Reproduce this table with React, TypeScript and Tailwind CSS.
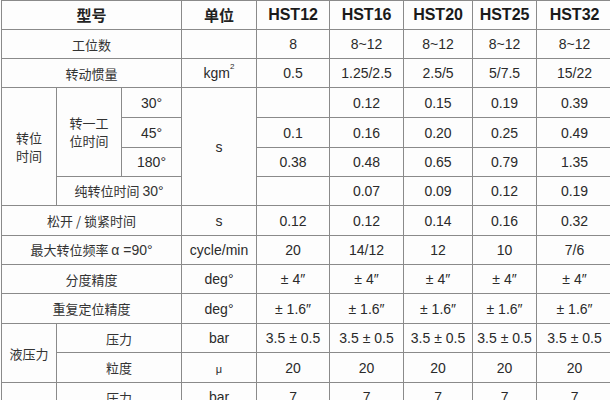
const cols = [55, 65, 60, 75, 73, 74, 69, 64, 76];

function C({
  children,
  cs,
  rs,
  cn = true,
}: {
  children?: React.ReactNode;
  cs?: number;
  rs?: number;
  cn?: boolean;
}) {
  return (
    <td
      colSpan={cs}
      rowSpan={rs}
      className={
        "border border-[#8a8a8a] text-center align-middle p-0 leading-none " +
        (cn
          ? "text-[13px] text-[#333] font-['Noto_Sans_CJK_SC',sans-serif]"
          : "text-[14px] text-[#2a2a2a] font-['Liberation_Sans',Arial,sans-serif]")
      }
    >
      {children}
    </td>
  );
}

function Vals({ v }: { v: string[] }) {
  return (
    <>
      {v.map((x, i) => (
        <C key={i} cn={false}>
          {x}
        </C>
      ))}
    </>
  );
}

const deg = "°";

export default function App() {
  return (
    <div className="w-[610px] h-[400px] overflow-hidden bg-[#fdfdfd]">
      <table className="table-fixed border-collapse w-[612px] ml-px">
        <colgroup>
          {cols.map((w, i) => (
            <col key={i} style={{ width: w }} />
          ))}
        </colgroup>
        <tbody>
          <tr className="h-[29px]">
            <td colSpan={3} className="border border-[#8a8a8a] text-center text-[15px] font-bold text-[#222] font-['Noto_Sans_CJK_SC',sans-serif]">
              型号
            </td>
            <td className="border border-[#8a8a8a] text-center text-[15px] font-bold text-[#222] font-['Noto_Sans_CJK_SC',sans-serif]">
              单位
            </td>
            {["HST12", "HST16", "HST20", "HST25", "HST32"].map((h) => (
              <td key={h} className="border border-[#8a8a8a] text-center text-[16px] font-bold text-[#1a1a1a] font-['Liberation_Sans',Arial,sans-serif]">
                {h}
              </td>
            ))}
          </tr>
          <tr className="h-[29px]">
            <C cs={3}>工位数</C>
            <C />
            <Vals v={["8", "8~12", "8~12", "8~12", "8~12"]} />
          </tr>
          <tr className="h-[29px]">
            <C cs={3}>转动惯量</C>
            <C cn={false}>
              kgm<sup className="text-[8px] align-top relative top-[1px]">2</sup>
            </C>
            <Vals v={["0.5", "1.25/2.5", "2.5/5", "5/7.5", "15/22"]} />
          </tr>
          <tr className="h-[30px]">
            <C rs={4}>
              <span className="leading-[18px] block">
                转位
                <br />
                时间
              </span>
            </C>
            <C rs={3}>
              <span className="leading-[18px] block">
                转一工
                <br />
                位时间
              </span>
            </C>
            <C cn={false}>30{deg}</C>
            <C rs={4} cn={false}>s</C>
            <Vals v={["", "0.12", "0.15", "0.19", "0.39"]} />
          </tr>
          <tr className="h-[30px]">
            <C cn={false}>45{deg}</C>
            <Vals v={["0.1", "0.16", "0.20", "0.25", "0.49"]} />
          </tr>
          <tr className="h-[29px]">
            <C cn={false}>180{deg}</C>
            <Vals v={["0.38", "0.48", "0.65", "0.79", "1.35"]} />
          </tr>
          <tr className="h-[29px]">
            <C cs={2}>
              纯转位时间 <span className="text-[14px] font-['Liberation_Sans',Arial,sans-serif]">30{deg}</span>
            </C>
            <Vals v={["", "0.07", "0.09", "0.12", "0.19"]} />
          </tr>
          <tr className="h-[30px]">
            <C cs={3}>松开 / 锁紧时间</C>
            <C cn={false}>s</C>
            <Vals v={["0.12", "0.12", "0.14", "0.16", "0.32"]} />
          </tr>
          <tr className="h-[29px]">
            <C cs={3}>
              最大转位频率 <span className="text-[14px] font-['Liberation_Sans',Arial,sans-serif]">α =90{deg}</span>
            </C>
            <C cn={false}>cycle/min</C>
            <Vals v={["20", "14/12", "12", "10", "7/6"]} />
          </tr>
          <tr className="h-[29px]">
            <C cs={3}>分度精度</C>
            <C cn={false}>deg{deg}</C>
            <Vals v={["± 4″", "± 4″", "± 4″", "± 4″", "± 4″"]} />
          </tr>
          <tr className="h-[30px]">
            <C cs={3}>重复定位精度</C>
            <C cn={false}>deg{deg}</C>
            <Vals v={["± 1.6″", "± 1.6″", "± 1.6″", "± 1.6″", "± 1.6″"]} />
          </tr>
          <tr className="h-[29px]">
            <C rs={2}>液压力</C>
            <C cs={2}>压力</C>
            <C cn={false}>bar</C>
            <Vals v={["3.5 ± 0.5", "3.5 ± 0.5", "3.5 ± 0.5", "3.5 ± 0.5", "3.5 ± 0.5"]} />
          </tr>
          <tr className="h-[30px]">
            <C cs={2}>粒度</C>
            <C cn={false}>
              <span className="text-[11px]">μ</span>
            </C>
            <Vals v={["20", "20", "20", "20", "20"]} />
          </tr>
          <tr className="h-[29px]">
            <C />
            <C cs={2}>压力</C>
            <C cn={false}>bar</C>
            <Vals v={["7", "7", "7", "7", "7"]} />
          </tr>
        </tbody>
      </table>
    </div>
  );
}
